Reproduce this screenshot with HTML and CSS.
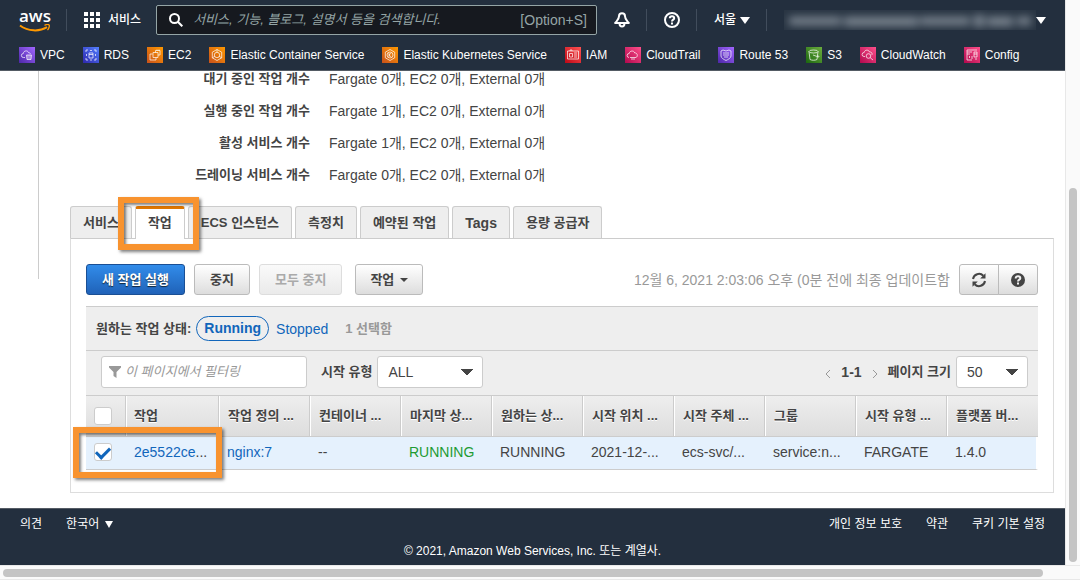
FILE: index.html
```
<!DOCTYPE html>
<html lang="ko">
<head>
<meta charset="utf-8">
<title>Amazon ECS</title>
<link rel="stylesheet" href="styles.css">
</head>
<body>
<div class="window">
<div class="page">
  <header class="header">
    <div class="topbar">
      <a class="logo" href="#" aria-label="aws"><span class="logo-text">aws</span>
        <svg class="logo-smile" width="32" height="9" viewBox="0 0 32 9"><path d="M1 1.5C9 7.6 20.500 7.800 28 3.200" fill="none" stroke="#f90" stroke-width="2"/><path d="M25.500 1.300c2-.9 4.200-.8 4.700-.2.500.7-.2 3.400-1.700 5" fill="none" stroke="#f90" stroke-width="1.300"/></svg>
      </a>
      <span class="divider"></span>
      <button class="top-btn services">
        <svg width="16" height="16" viewBox="0 0 16 16" fill="#fff"><path d="M0 0h4v4H0zM6 0h4v4H6zM12 0h4v4h-4zM0 6h4v4H0zM6 6h4v4H6zM12 6h4v4h-4zM0 12h4v4H0zM6 12h4v4H6zM12 12h4v4h-4z"/></svg>
        서비스
      </button>
      <label class="search">
        <svg width="14" height="14" viewBox="0 0 14 14" fill="none" stroke="#fff" stroke-width="2"><circle cx="5.500" cy="5.500" r="4.500"/><path d="M8.800 8.800l4.500 4.500"/></svg>
        <input type="text" aria-label="검색" placeholder="서비스, 기능, 블로그, 설명서 등을 검색합니다.">
        <span class="hint">[Option+S]</span>
      </label>
      <button class="top-btn icon-btn" aria-label="알림"><svg width="16" height="16" viewBox="0 0 16 16" fill="none" stroke="#fff" stroke-width="2" stroke-linejoin="round"><path d="M8 1.200C6 1.200 5 2.500 5 4.200c0 3-1.500 4-3.800 6.800h13.600C12.500 8.200 11 7.200 11 4.200 11 2.500 10 1.200 8 1.200z"/><path d="M5.600 12a2.400 2.400 0 0 0 4.800 0"/></svg></button>
      <span class="divider"></span>
      <button class="top-btn icon-btn" aria-label="도움말"><svg width="16" height="16" viewBox="0 0 16 16" fill="none" stroke="#fff" stroke-width="2"><circle cx="8" cy="8" r="7"/><path d="M5.800 6.300c0-1.400 1-2.100 2.200-2.100s2.200.8 2.200 2c0 1.400-2.200 1.500-2.200 3.300M8 10.600v1.800"/></svg></button>
      <span class="divider"></span>
      <button class="top-btn region">서울 <span class="caret"></span></button>
      <span class="divider"></span>
      <button class="top-btn account" aria-label="계정"><span class="redacted"><svg width="100%" height="20" viewBox="0 0 252 20" preserveAspectRatio="none" fill="#7d8792"><path d="M5 7h52v8H5zM60 7h74v9H60zM136 7h50v8h-50zM190 5h10v12h-10zM203 7h26v9h-26zM233 7h14v8h-14z"/></svg></span><span class="caret"></span></button>
    </div>
    <nav class="shortcuts">
      <a href="#"><svg class="svc violet" viewBox="0 0 16 16"><path d="M6 10.500H4.500a2 2 0 0 1-.2-4c.2-3 4.500-3.500 5.200-.9 1.300 0 1.800.6 1.800 1.400M7.500 8h5l-.5 4.500H8zM9 8v4.500M11 8v4.500"/></svg>VPC</a>
      <a href="#"><svg class="svc blue" viewBox="0 0 16 16"><path d="M3 5V3h2M11 3h2v2M13 11v2h-2M5 13H3v-2M6 6h4v5H6zM6 7.500h4M3.500 7v2M12.500 7v2M7 3.500h2M7 13h2"/></svg>RDS</a>
      <a href="#"><svg class="svc orange" viewBox="0 0 16 16"><path d="M5.500 7H3v6h6v-2.500M8.500 3.500h4.500v4.500h-2M6 5.500h5V10.500H6zM8.500 3.500v2M10 2.500v1M12 2.500v1"/></svg>EC2</a>
      <a href="#"><svg class="svc orange" viewBox="0 0 16 16"><path d="M8 2.500l4.700 2.700v5.600L8 13.500l-4.700-2.700V5.200z"/><circle cx="8" cy="8" r="2.700"/><path d="M8 2.500v2.800M3.300 10.800l2.500-1.400M12.700 10.800l-2.500-1.400"/></svg>Elastic Container Service</a>
      <a href="#"><svg class="svc orange" viewBox="0 0 16 16"><path d="M8 2.500l4.700 2.700v5.600L8 13.500l-4.700-2.700V5.200z"/><circle cx="8" cy="8" r="3"/><path d="M7 6v4M9.300 6L7 8l2.300 2"/></svg>Elastic Kubernetes Service</a>
      <a href="#"><svg class="svc red" viewBox="0 0 16 16"><path d="M2.500 4h11v8h-11zM4.500 6.500h3v3.500h-3zM9 6h3M9 8h3M9 10h3M5 4V3h2v1"/></svg>IAM</a>
      <a href="#"><svg class="svc pink" viewBox="0 0 16 16"><path d="M4 10.500a2 2 0 0 1 .2-4c.4-3 4.800-3.300 5.500-.6 3-.2 3.400 3.800 1.300 4.600M5 10.500h6M6 12h4"/></svg>CloudTrail</a>
      <a href="#"><svg class="svc violet" viewBox="0 0 16 16"><path d="M3 4l2-1 3 1 3-1 2 1v5c0 2-3 3.500-5 4.500-2-1-5-2.500-5-4.500zM5 6h6M5 8h6M6 10h4"/></svg>Route 53</a>
      <a href="#"><svg class="svc green" viewBox="0 0 16 16"><ellipse cx="7.500" cy="4.500" rx="4.500" ry="1.500"/><path d="M3 4.500l1 8c2 1 5 1 7 0l1-8M7 8l5.500 2c1-.4.300-1-.8-1.600"/></svg>S3</a>
      <a href="#"><svg class="svc pink" viewBox="0 0 16 16"><path d="M5 9.500H4a2 2 0 0 1 .2-4c.4-3 4.500-3 5.300-.6 2 0 3 1.300 2.500 3"/><circle cx="8.500" cy="9" r="2.300"/><path d="M10.200 10.700l2.800 2.300"/></svg>CloudWatch</a>
      <a href="#"><svg class="svc pink" viewBox="0 0 16 16"><path d="M3 3h10M3 5h5M3 7h3M3 3v10h5M10 5h3v5h-3zM10 7h3M8 9v3M11 12h2M5.500 9v2"/></svg>Config</a>
    </nav>
  </header>

  <main class="main">
    <div class="side-edge"></div>
    <div class="content">
      <dl class="summary">
        <dt>대기 중인 작업 개수</dt><dd>Fargate 0개, EC2 0개, External 0개</dd>
        <dt>실행 중인 작업 개수</dt><dd>Fargate 1개, EC2 0개, External 0개</dd>
        <dt>활성 서비스 개수</dt><dd>Fargate 1개, EC2 0개, External 0개</dd>
        <dt>드레이닝 서비스 개수</dt><dd>Fargate 0개, EC2 0개, External 0개</dd>
      </dl>

      <div class="tabs" role="tablist">
        <button class="tab" role="tab">서비스</button>
        <div class="tab-mark"><button class="tab active" role="tab" aria-selected="true">작업</button><span class="callout callout-tab"></span></div>
        <button class="tab" role="tab">ECS 인스턴스</button>
        <button class="tab" role="tab">측정치</button>
        <button class="tab" role="tab">예약된 작업</button>
        <button class="tab latin" role="tab">Tags</button>
        <button class="tab" role="tab">용량 공급자</button>
      </div>

      <section class="panel">
        <div class="toolbar">
          <button class="btn primary">새 작업 실행</button>
          <button class="btn">중지</button>
          <button class="btn" disabled>모두 중지</button>
          <button class="btn menu">작업 <span class="caret small"></span></button>
          <span class="updated">12월 6, 2021 2:03:06 오후 (0분 전에 최종 업데이트함</span>
          <div class="group">
            <button class="btn" aria-label="새로 고침"><svg width="16" height="16" viewBox="0 0 16 16" fill="none" stroke="#444" stroke-width="2"><path d="M2 7a6 6 0 0 1 10.300-3.200M14 9a6 6 0 0 1-10.300 3.200"/><path d="M14.500 1.200v5.300H9.200zM1.500 14.800V9.500h5.300z" fill="#444" stroke="none"/></svg></button>
            <button class="btn" aria-label="도움말"><svg width="14" height="14" viewBox="0 0 14 14"><circle cx="7" cy="7" r="7" fill="#444"/><path d="M4.700 5.400C4.700 3.900 5.700 3.300 7 3.300s2.300.7 2.300 1.900C9.300 6.700 7 6.700 7 8.500M7 9.600v1.900" fill="none" stroke="#f2f2f2" stroke-width="2"/></svg></button>
          </div>
        </div>

        <div class="grid-box">
          <div class="status-row">
            <span class="strong">원하는 작업 상태:</span>
            <a class="pill" href="#">Running</a>
            <a class="stopped" href="#">Stopped</a>
            <span class="selected">1 선택함</span>
          </div>
          <div class="filter-row">
            <label class="filter"><svg width="12" height="12" viewBox="0 0 12 12" fill="#999"><path d="M0 0h12v1.500L7.500 6v6l-3-2V6L0 1.500z"/></svg><input type="text" aria-label="필터" placeholder="이 페이지에서 필터링"></label>
            <label class="strong launch" for="launch">시작 유형</label>
            <select id="launch" class="select type"><option>ALL</option></select>
            <div class="pager">
              <button aria-label="이전"><svg width="6" height="10" viewBox="0 0 6 10"><path d="M5 1L1 5l4 4"/></svg></button>
              <b>1-1</b>
              <button aria-label="다음"><svg width="6" height="10" viewBox="0 0 6 10"><path d="M1 1l4 4-4 4"/></svg></button>
            </div>
            <label class="strong" for="size">페이지 크기</label>
            <select id="size" class="select size"><option>50</option></select>
          </div>
          <table class="tasks">
            <colgroup><col class="c-check"><col class="c-task"><col><col><col><col><col><col><col><col><col></colgroup>
            <thead><tr>
              <th><input type="checkbox" aria-label="모두 선택"></th><th>작업</th><th>작업 정의 ...</th><th>컨테이너 ...</th><th>마지막 상...</th><th>원하는 상...</th><th>시작 위치 ...</th><th>시작 주체 ...</th><th>그룹</th><th>시작 유형 ...</th><th>플랫폼 버...</th>
            </tr></thead>
            <tbody><tr>
              <td><input type="checkbox" checked aria-label="작업 선택"></td><td><a href="#">2e5522ce</a>...</td><td><a href="#">nginx:7</a></td><td>--</td><td class="ok">RUNNING</td><td>RUNNING</td><td>2021-12-...</td><td>ecs-svc/...</td><td>service:n...</td><td>FARGATE</td><td>1.4.0</td>
            </tr></tbody>
          </table>
          <span class="callout callout-row"></span>
        </div>
      </section>
    </div>
  </main>

  <footer class="footer">
    <div class="footer-links">
      <a href="#">의견</a>
      <a class="lang" href="#">한국어 <span class="caret"></span></a>
      <a class="first-right" href="#">개인 정보 보호</a>
      <a href="#">약관</a>
      <a href="#">쿠키 기본 설정</a>
    </div>
    <div class="copyright">© 2021, Amazon Web Services, Inc. 또는 계열사.</div>
  </footer>
</div>
<div class="bar-v"><span></span></div>
<div class="bar-h"><span></span></div>
</div>
</body>
</html>
```
FILE: styles.css
```
* { box-sizing: border-box; }
body { margin: 0; background: #fff; color: #444; font-family: "Liberation Sans", "Noto Sans CJK KR", sans-serif; font-size: 13px; line-height: 16px; }
button, input, select { font: inherit; color: inherit; margin: 0; }
button { cursor: pointer; white-space: nowrap; }
a { color: #16b; text-decoration: none; }
svg { display: block; flex: none; }

.window { display: grid; grid-template-columns: minmax(0, 1fr) 15px; grid-template-rows: 1fr 15px; min-height: 100vh; }
.page { display: flex; flex-direction: column; }
.bar-v { background: #fafafa; border-left: 1px solid #e8e8e8; padding: 188px 3px 3px; display: flex; }
.bar-h { grid-column: 1 / -1; background: #fafafa; border: solid #e8e8e8; border-width: 1px 0; padding: 3px 37px 2px 3px; display: flex; }
.bar-v span, .bar-h span { flex: 1; border-radius: 4px; background: #c4c4c4; }

/* Header */
.header { background: #232f3e; color: #fff; border-bottom: 1px solid #545b64; font-size: 12px; }
.topbar { display: flex; align-items: center; height: 40px; padding: 0 19px; }
.logo { color: #fff; display: flex; flex-direction: column; width: 31px; margin-right: 16px; }
.logo-text { font: 600 17px/15px "Open Sans", sans-serif; text-align: center; }
.logo-smile { margin-top: 1px; }
.divider { width: 1px; height: 22px; background: #414d5c; }
.top-btn { background: none; border: 0; padding: 0; display: flex; align-items: center; }
.services { gap: 8px; margin: 0 15px 0 17px; font-weight: 500; }
.search { flex: 1; display: flex; align-items: center; gap: 10px; height: 30px; margin-right: 17px; padding: 0 9px 0 12px; background: #16191f; border: 1px solid #95a5a6; border-radius: 2px; }
.search input { flex: 1; min-width: 0; background: none; border: 0; padding: 0; font-size: 13px; }
.search input::placeholder { color: #95a5a6; font-style: italic; }
.hint { color: #95a5a6; font-size: 14px; }
.icon-btn { margin-right: 16px; }
.divider + .icon-btn { margin-left: 17px; }
.region { gap: 4px; margin: 0 16px 0 17px; font-weight: 500; }
.caret { width: 0; height: 0; border: solid transparent; border-width: 7px 5px 0; border-top-color: currentColor; }
.caret.small { border-width: 4px 4px 0; border-top-color: currentColor; }
.account { margin-left: 17px; }
.redacted { width: 252px; height: 20px; overflow: hidden; background: #293543; }
.redacted svg { filter: blur(4px); }
.shortcuts { display: flex; gap: 18px; height: 30px; padding: 7px 19px 0; white-space: nowrap; }
.shortcuts a { display: flex; gap: 5px; color: #fff; height: 16px; }
.svc { width: 16px; height: 16px; fill: none; stroke: rgba(255, 255, 255, 0.7); stroke-width: 1; }
.violet { background: linear-gradient(45deg, #4d27a8, #a166ff); }
.blue { background: linear-gradient(45deg, #2e27ad, #527fff); }
.orange { background: linear-gradient(45deg, #c8511b, #f90); }
.red { background: linear-gradient(45deg, #bd0816, #ff5252); }
.pink { background: linear-gradient(45deg, #b0084d, #ff4f8b); }
.green { background: linear-gradient(45deg, #1b660f, #6cae3e); }

/* Summary */
.main { flex: 1; display: flex; }
.side-edge { width: 39px; height: 208px; border-right: 1px solid #ccc; }
.content { flex: 1; min-width: 0; padding: 0 11px 15px 31px; }
.summary { display: grid; grid-template-columns: 240px 1fr; gap: 16px 19px; margin: 0 0 23px; }
.summary dt { text-align: right; font-weight: bold; }
.summary dd { margin: 0; font-size: 14px; }

/* Tabs */
.tabs { display: flex; gap: 3px; }
.tab { height: 32px; padding: 0 12px; background: #eee; border: 1px solid #ccc; border-bottom: 0; border-radius: 3px 3px 0 0; font-weight: bold; }
.tab.latin { font-size: 14px; }
.tab.active { height: 33px; margin-bottom: -1px; background: #fff; border-top: 3px solid #e07700; padding-bottom: 2px; }
.tab-mark { position: relative; z-index: 1; }
.callout { position: absolute; border: 6px solid #f8932f; box-shadow: 2px 2px 3px rgba(0, 0, 0, 0.5), inset 2px 2px 3px rgba(0, 0, 0, 0.5); pointer-events: none; }
.callout-tab { inset: -9px -14px -12px -17px; }
.callout-row { left: -13px; bottom: -8px; width: 149px; height: 51px; }

/* Panel */
.panel { border: 1px solid #ddd; border-top-color: #ccc; padding: 25px 15px 22px; }
.toolbar { display: flex; align-items: center; gap: 9px; margin-bottom: 11px; }
.btn { height: 31px; padding: 0 15px; border: 1px solid #bbb; border-radius: 3px; background: linear-gradient(#fff, #ddd); font-weight: bold; }
.btn.primary { color: #fff; background: linear-gradient(#318cea, #2062b8); border-color: #1a4f94; text-shadow: 0 1px 1px #123; }
.btn:disabled { color: #aaa; background: linear-gradient(#fafafa, #eaeaea); border-color: #ddd; }
.btn.menu { display: flex; align-items: center; gap: 6px; margin-left: 4px; padding: 0 14px; }
.updated { margin-left: auto; color: #999; font-size: 14px; white-space: nowrap; }
.group { display: flex; }
.group .btn { width: 40px; padding: 0; display: flex; align-items: center; justify-content: center; border-radius: 3px 0 0 3px; }
.group .btn + .btn { margin-left: -1px; border-radius: 0 3px 3px 0; }

.grid-box { position: relative; border-top: 1px solid #ccc; background: #eee; }
.strong { font-weight: bold; white-space: nowrap; }
.status-row { display: flex; align-items: center; height: 43px; padding-left: 10px; font-size: 14px; }
.status-row .strong { font-size: 13px; margin-right: 5px; }
.pill { height: 25px; line-height: 23px; padding: 0 7px; border: 1px solid #16b; border-radius: 13px; font-weight: bold; }
.stopped { margin: 0 17px 0 7px; }
.selected { color: #999; font-size: 13px; font-weight: bold; }
.filter-row { display: flex; align-items: center; height: 46px; padding: 0 10px 2px 15px; border: solid #ccc; border-width: 1px 0; }
.filter, .select { height: 32px; background: #fff; border: 1px solid #ccc; border-radius: 3px; }
.filter { display: flex; align-items: center; gap: 4px; width: 206px; padding: 0 7px; }
.filter input { flex: 1; min-width: 0; border: 0; padding: 0; }
.filter input::placeholder { color: #999; font-style: italic; }
.launch { margin-left: 14px; }
.select {
  appearance: none; margin-left: 5px; padding: 0 10px; font-size: 14px;
  background: linear-gradient(to bottom left, #444 50%, transparent 51%) no-repeat right 15px center / 6px 6px, linear-gradient(to bottom right, #444 50%, transparent 51%) no-repeat right 9px center / 6px 6px, #fff;
}
.type { width: 106px; }
.size { width: 72px; }
.pager { display: flex; align-items: center; gap: 10px; margin: 0 10px 0 auto; font-size: 14px; }
.pager button { background: none; border: 0; padding: 3px 0 0; }
.pager svg { fill: none; stroke: #999; }

/* Table */
.tasks { width: 100%; table-layout: fixed; border-collapse: separate; border-spacing: 0; }
.c-check { width: 40px; }
.c-task { width: 93px; }
.tasks th, .tasks td { padding: 0 8px; text-align: left; white-space: nowrap; overflow: hidden; }
.tasks th { height: 41px; border-right: 1px solid #ccc; border-bottom: 1px solid #ccc; background: linear-gradient(#eee, #ddd); box-shadow: inset 1px 0 #fff; text-shadow: 0 1px #fff; }
.tasks th:nth-child(n+3) { padding-left: 9px; }
.tasks th:last-child { border-right: 0; }
.tasks th:first-child { box-shadow: none; }
.tasks td { height: 33px; padding: 0 8px 2px; border-bottom: 1px solid #ccc; background: #e5f1fd; font-size: 14px; }
.tasks .ok { color: #1e9b33; }
.tasks td:last-child { border-right: 2px solid #fff; }
.tasks input { appearance: none; display: block; width: 18px; height: 18px; background: #fff; border: 1px solid #ccc; border-radius: 3px; }
.tasks input:checked { display: grid; place-items: center; }
.tasks input:checked::after { content: ""; width: 11px; height: 6px; margin-bottom: 2px; border: solid #16b; border-width: 0 0 3px 3px; transform: rotate(-45deg); }

/* Footer */
.footer { background: #232f3e; border-top: 1px solid #545b64; color: #fff; font-size: 12px; padding: 7px 20px 6px; }
.footer a { color: #fff; }
.footer-links { display: flex; gap: 24px; margin-bottom: 11px; }
.lang { display: flex; align-items: center; gap: 6px; }
.footer .caret { border-width: 7px 4px 0; }
.first-right { margin-left: auto; }
.copyright { text-align: center; }
```
